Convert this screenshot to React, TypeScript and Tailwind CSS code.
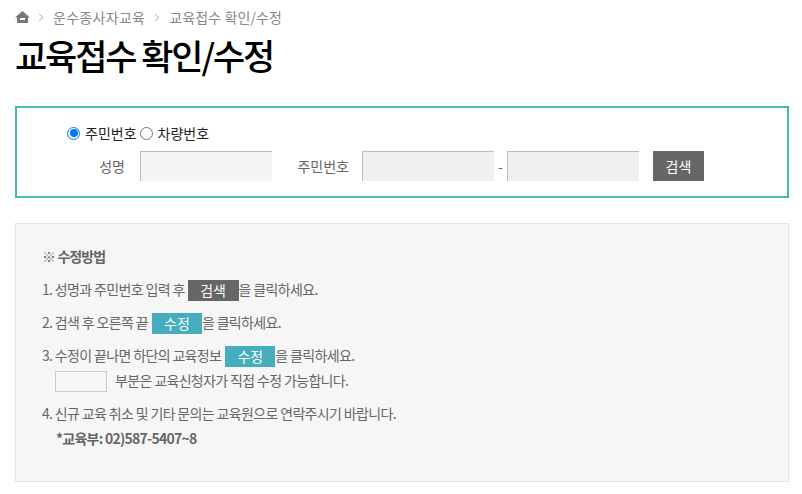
function Chevron() {
  return (
    <svg width="6" height="9" viewBox="0 0 6 9" className="shrink-0">
      <path d="M1 1 L5 4.5 L1 8" fill="none" stroke="#aaa" strokeWidth="1" />
    </svg>
  );
}

export default function App() {
  return (
    <div className="w-[802px] h-[494px] overflow-hidden bg-white pl-[15px] pr-[13px] font-['Noto_Sans_CJK_KR','Noto_Sans',sans-serif] text-[14px] tracking-[-0.65px] text-[#666]">
      <div className="h-[34px] flex items-center text-[14px] tracking-[0.3px] text-[#888]">
        <svg width="15" height="12" viewBox="0 0 15 12" className="mr-[8px] shrink-0">
          <path d="M7.5 0 L15 6.5 H13 V12 H2 V6.5 H0 Z M5 7 V9 H10 V7 Z" fill="#777" fillRule="evenodd" />
        </svg>
        <Chevron />
        <span className="ml-[9px]">운수종사자교육</span>
        <span className="mx-[9px] flex"><Chevron /></span>
        <span className="tracking-[0.1px]">교육접수 확인/수정</span>
      </div>
      <h1 className="h-[42px] flex items-center pb-[2px] text-[35px] leading-none font-medium tracking-[-2.1px] text-black">교육접수 확인/수정</h1>
      <div className="mt-[30px] h-[92px] border-2 border-[#48b9b2] pt-[16px] flex flex-col">
        <div className="h-[18px] pl-[50px] flex items-center text-[14px] tracking-[0px] text-[#222]">
          <span className="w-[13px] h-[13px] rounded-full border-[1.5px] border-[#0075ff] flex items-center justify-center mr-[5px]"><span className="w-[8px] h-[8px] rounded-full bg-[#0075ff]" /></span>
          <span>주민번호</span>
          <span className="w-[13px] h-[13px] rounded-full border border-[#767676] ml-[3px] mr-[5px]" />
          <span>차량번호</span>
        </div>
        <div className="mt-[9px] flex items-center h-[30px] tracking-[0px]">
          <span className="w-[108px] text-right text-[14px]">성명</span>
          <div className="ml-[15px] w-[132px] h-[30px] bg-[#f5f5f5] border-l border-t border-[#bbb]" />
          <span className="ml-[24px] w-[53px] text-right text-[14px] whitespace-nowrap">주민번호</span>
          <div className="ml-[13px] w-[132px] h-[30px] bg-[#f0f0f0] border-l border-t border-[#bbb]" />
          <span className="w-[13px] text-center">-</span>
          <div className="w-[132px] h-[30px] bg-[#f0f0f0] border-l border-t border-[#bbb]" />
          <button className="ml-[14px] w-[51px] h-[30px] bg-[#666] text-white text-[14px]">검색</button>
        </div>
      </div>
      <div className="mt-[25px] h-[259px] bg-[#f6f6f6] border border-[#e2e2e2] pl-[26px] pt-[21px] leading-[25px]">
        <div className="h-[25px] flex items-center pb-[2px] font-bold tracking-[-0.9px]">※ 수정방법</div>
        <div className="mt-[8px] h-[25px] flex items-center">
          <span className="pb-[2px]">1. 성명과 주민번호 입력 후</span><span className="ml-[3px] w-[51px] h-[21px] bg-[#666] text-white flex items-center justify-center tracking-[0px]">검색</span><span className="pb-[2px]">을 클릭하세요.</span>
        </div>
        <div className="mt-[8px] h-[25px] flex items-center">
          <span className="pb-[2px]">2. 검색 후 오른쪽 끝</span><span className="ml-[4px] w-[50px] h-[21px] bg-[#45adbc] text-white flex items-center justify-center tracking-[0px]">수정</span><span className="pb-[2px]">을 클릭하세요.</span>
        </div>
        <div className="mt-[8px] h-[25px] flex items-center">
          <span className="pb-[2px]">3. 수정이 끝나면 하단의 교육정보</span><span className="ml-[4px] w-[50px] h-[21px] bg-[#45adbc] text-white flex items-center justify-center tracking-[0px]">수정</span><span className="pb-[2px]">을 클릭하세요.</span>
        </div>
        <div className="h-[25px] flex items-center pl-[13px]">
          <span className="w-[52px] h-[21px] bg-[#f6f6f6] border border-[#ccc] mr-[8px]" />
          <span className="pb-[2px]">부분은 교육신청자가 직접 수정 가능합니다.</span>
        </div>
        <div className="mt-[8px] h-[25px] flex items-center pb-[2px]">4. 신규 교육 취소 및 기타 문의는 교육원으로 연락주시기 바랍니다.</div>
        <div className="h-[25px] flex items-center pb-[2px] pl-[14px] font-bold tracking-[-0.75px]">*교육부: 02)587-5407~8</div>
      </div>
    </div>
  );
}
